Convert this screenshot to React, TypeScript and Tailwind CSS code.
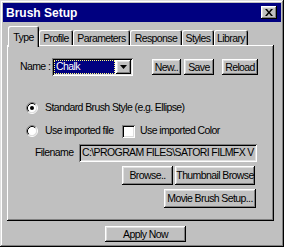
import React from "react";

const raised =
  "bg-[#c0c0c0] shadow-[inset_-1px_-1px_#000,inset_1px_1px_#fff,inset_-2px_-2px_#808080,inset_2px_2px_#dfdfdf]";
const sunken =
  "shadow-[inset_1px_1px_#808080,inset_-1px_-1px_#fff,inset_2px_2px_#000,inset_-2px_-2px_#dfdfdf]";

function Radio({ checked = false }: { checked?: boolean }) {
  return (
    <svg width="12" height="12" viewBox="0 0 12 12" className="shrink-0">
      <circle cx="6" cy="6" r="4.5" fill="#fff" />
      <path d="M2.11 9.89 A5.5 5.5 0 0 1 9.89 2.11" stroke="#808080" fill="none" />
      <path d="M9.89 2.11 A5.5 5.5 0 0 1 2.11 9.89" stroke="#fff" fill="none" />
      <path d="M2.82 9.18 A4.5 4.5 0 0 1 9.18 2.82" stroke="#000" fill="none" />
      <path d="M9.18 2.82 A4.5 4.5 0 0 1 2.82 9.18" stroke="#dfdfdf" fill="none" />
      {checked && <circle cx="6" cy="6" r="2" fill="#000" />}
    </svg>
  );
}

function Button({ label, className = "" }: { label: string; className?: string }) {
  return (
    <div className={`${raised} flex items-center justify-center shrink-0 ${className}`}>
      <span className="leading-none">{label}</span>
    </div>
  );
}

const tabs = [
  { name: "Type", w: "w-[31px]" },
  { name: "Profile", w: "w-[34px]" },
  { name: "Parameters", w: "w-[57px]" },
  { name: "Response", w: "w-[52px]" },
  { name: "Styles", w: "w-[32px]" },
  { name: "Library", w: "w-[34px]" },
];

export default function App() {
  return (
    <div className="w-[284px] h-[247px] p-[3px] bg-[#c0c0c0] text-black text-[10.5px] tracking-[-0.6px] whitespace-nowrap font-['Liberation_Sans',Arial,sans-serif] shadow-[inset_-1px_-1px_#000,inset_1px_1px_#dfdfdf,inset_-2px_-2px_#808080,inset_2px_2px_#fff] overflow-hidden">
      {/* title bar */}
      <div className="h-[19px] bg-[#000080] flex items-center justify-between pl-[3px] pr-[4px]">
        <span className="text-white font-bold text-[12px] tracking-normal">Brush Setup</span>
        <div className={`${raised} w-[16px] h-[13px] flex items-center justify-center`}>
          <svg width="8" height="7" viewBox="0 0 8 7">
            <path d="M0 0h2l2 2.5L6 0h2L5 3.5 8 7H6L4 4.5 2 7H0l3-3.5z" fill="#000" />
          </svg>
        </div>
      </div>

      {/* tabs */}
      <div className="flex items-end h-[20px] mt-[3px] pl-[5px]">
        {tabs.map((t, i) =>
          i === 0 ? (
            <div
              key={t.name}
              className={`${t.w} relative z-10 h-[21px] -mb-[2px] bg-[#c0c0c0] rounded-t-[2px] shadow-[inset_1px_1px_#fff,inset_-1px_0_#000,inset_-2px_0_#808080] flex items-start justify-center pt-[4px]`}
            >
              {t.name}
            </div>
          ) : (
            <div
              key={t.name}
              className={`${t.w} h-[15px] rounded-t-[2px] shadow-[inset_1px_1px_#fff,inset_-1px_0_#000,inset_-2px_0_#808080] flex items-start justify-center pt-[1px]`}
            >
              {t.name}
            </div>
          )
        )}
      </div>

      {/* tab panel */}
      <div className="ml-[4px] w-[267px] h-[176px] shadow-[inset_-1px_-1px_#000,inset_1px_1px_#fff,inset_-2px_-2px_#808080] flex flex-col">
        <div className="flex items-center h-[18px] mt-[13px] pl-[13px]">
          <span className="w-[32px]">Name :</span>
          <div className={`${sunken} bg-white w-[81px] h-[18px] flex p-[2px]`}>
            <div className="flex-1 bg-[#000080] text-white border border-dotted border-[#ffff80] flex items-center pl-[1px] mr-[1px]">
              Chalk
            </div>
            <div className={`${raised} w-[15px] flex items-center justify-center`}>
              <svg width="7" height="4" viewBox="0 0 7 4">
                <path d="M0 0h7L3.5 4z" fill="#000" />
              </svg>
            </div>
          </div>
          <Button label="New.." className="w-[29px] h-[16px] ml-[19px]" />
          <Button label="Save" className="w-[30px] h-[16px] ml-[3px]" />
          <Button label="Reload" className="w-[36px] h-[16px] ml-[8px]" />
        </div>

        <div className="flex items-center h-[14px] mt-[25px] pl-[19px] gap-[7px]">
          <Radio checked />
          <span>Standard Brush Style (e.g. Ellipse)</span>
        </div>

        <div className="flex items-center h-[14px] mt-[9px] pl-[19px]">
          <Radio />
          <span className="ml-[7px] w-[77px]">Use imported file</span>
          <div className={`${sunken} bg-white w-[13px] h-[13px]`} />
          <span className="ml-[5px]">Use imported Color</span>
        </div>

        <div className="flex items-center h-[18px] mt-[6px] pl-[28px]">
          <span className="w-[44px]">Filename</span>
          <div className={`${sunken} w-[178px] h-[18px] flex items-center pl-[3px] overflow-hidden`}>
            C:\PROGRAM FILES\SATORI FILMFX V
          </div>
        </div>

        <div className="flex h-[19px] mt-[4px] pl-[115px]">
          <Button label="Browse.." className="w-[51px]" />
          <Button label="Thumbnail Browse" className="w-[80px] ml-[2px]" />
        </div>

        <div className="flex h-[19px] mt-[4px] pl-[157px]">
          <Button label="Movie Brush Setup..." className="w-[92px]" />
        </div>
      </div>

      <div className="flex mt-[5px] pl-[102px]">
        <Button label="Apply Now" className="w-[81px] h-[16px]" />
      </div>
    </div>
  );
}
